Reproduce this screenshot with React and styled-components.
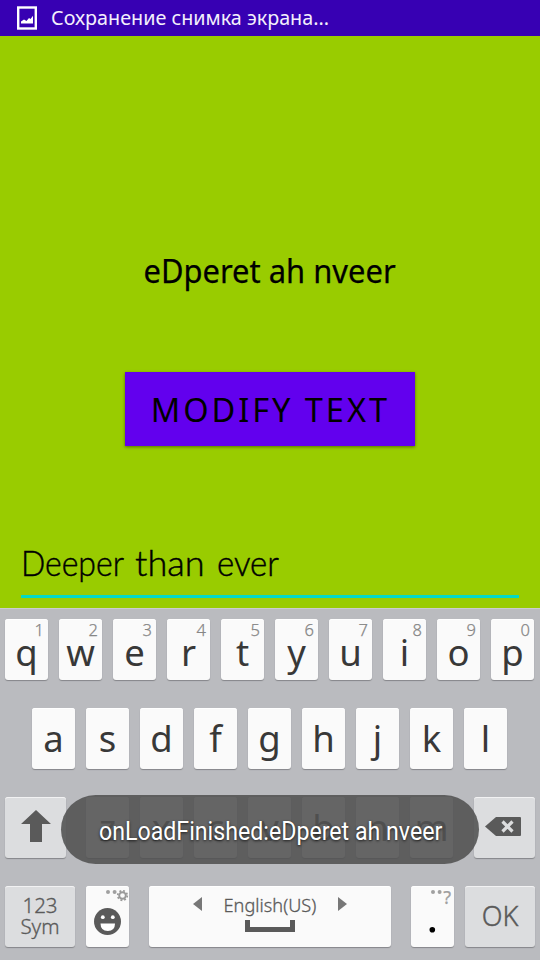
import React from "react";
import styled, { createGlobalStyle } from "styled-components";

const GlobalStyle = createGlobalStyle`
  * { box-sizing: border-box; }
  body { margin: 0; background: #99cc00; }
`;

const Screen = styled.div`
  position: relative;
  display: flex;
  flex-direction: column;
  width: 540px;
  height: 960px;
  overflow: hidden;
  background: #99cc00;
  font-family: "Noto Sans", "Open Sans", sans-serif;
  color: #000;
`;

const Text = styled.span`
  display: block;
  flex: none;
  white-space: pre;
  transform: scaleX(${(p) => p.$sx || 1});
  transform-origin: ${(p) => p.$origin || "center"};
`;

const StatusBar = styled.header`
  display: flex;
  flex: none;
  height: 36px;
  padding-left: 17px;
  background: #3700b3;
  color: #f3effc;
  svg { display: block; margin-top: 6px; margin-right: 14px; }
`;

const StatusText = styled(Text)`
  font-size: 20.5px;
  line-height: 35px;
`;

const Content = styled.main`
  display: flex;
  flex: none;
  flex-direction: column;
  align-items: center;
  height: 572px;
`;

const Title = styled(Text)`
  margin-top: 215px;
  height: 40px;
  font-size: 33px;
  line-height: 40px;
  -webkit-text-stroke: 0.25px #000;
`;

const ModifyButton = styled.button`
  display: flex;
  justify-content: center;
  width: 290px;
  height: 74px;
  margin-top: 81px;
  padding: 0 0 0 1px;
  border: 0;
  background: #6200ee;
  box-shadow: 0 1px 3px rgba(0, 0, 0, 0.45);
  color: #000;
  font-family: inherit;
  font-size: 33px;
  line-height: 75px;
  letter-spacing: 3px;
`;

const Field = styled.div`
  display: flex;
  gap: 13px;
  width: 498px;
  height: 61px;
  margin-top: 91px;
  border-bottom: 3px solid #03dac5;
`;

const FieldWord = styled.span`
  width: ${(p) => p.$w}px;
  font-family: Lato, sans-serif;
  font-weight: 300;
  font-size: 35.5px;
  line-height: 52px;
  -webkit-text-stroke: 0.45px #000;
`;

const Keyboard = styled.section`
  display: flex;
  flex: none;
  flex-direction: column;
  gap: 28px;
  height: 352px;
  padding: 10px 5px 0;
  border-top: 1px solid #cccdcf;
  background: #babbbf;
`;

const Row = styled.div`
  display: flex;
  flex: none;
  height: 61px;
  gap: 11px;
  padding-left: ${(p) => p.$indent || 0}px;
`;

const Key = styled.div`
  position: relative;
  display: flex;
  flex: none;
  flex-direction: column;
  align-items: center;
  width: ${(p) => p.$w || 43}px;
  height: 61px;
  margin-left: ${(p) => p.$ml || 0}px;
  border-radius: 3px;
  background: ${(p) => (p.$gray ? "#dcdddf" : "#fafafa")};
  box-shadow: 0 1px 1px #85868a, inset 0 1px 0 ${(p) => (p.$gray ? "#f2f2f3" : "#fff")};
  color: #5a5a5a;
`;

const Letter = styled(Text)`
  margin-top: ${(p) => p.$top || 0}px;
  color: #383838;
  font-size: 36.5px;
  line-height: 61px;
`;

const Hint = styled(Text)`
  position: absolute;
  top: 1px;
  right: 4px;
  color: #868686;
  font-size: 16.5px;
  font-weight: 300;
  line-height: 20px;
  -webkit-text-stroke: 0.25px;
`;

const PunctuationHint = styled(Hint)`
  right: 3px;
  color: #a0a0a0;
  font-size: 18px;
  font-weight: 400;
`;

const SymText = styled(Text)`
  font-size: 20.5px;
  font-weight: 300;
  line-height: 21px;
  -webkit-text-stroke: 0.3px;
  &:first-child { margin-top: 9px; }
`;

const OkText = styled(Text)`
  font-size: 27px;
  font-weight: 300;
  line-height: 60px;
  -webkit-text-stroke: 0.4px;
`;

const SpaceLabel = styled.div`
  display: flex;
  align-items: center;
  justify-content: space-between;
  width: 154px;
  height: 34px;
  padding-top: 4px;
  font-size: 18px;
  font-weight: 300;
  line-height: 29px;
  -webkit-text-stroke: 0.3px;
  svg { margin-bottom: 2px; }
`;

const KeyIcon = styled.svg`
  display: block;
`;

const Toast = styled.div`
  position: absolute;
  top: 795px;
  left: 61px;
  display: flex;
  justify-content: center;
  width: 418px;
  height: 69px;
  padding-left: 1px;
  border-radius: 35px;
  background: rgba(82, 82, 82, 0.89);
  color: #fff;
  font-family: Roboto, sans-serif;
  font-size: 26px;
  line-height: 72px;
  text-shadow: 0 1px 3px rgba(0, 0, 0, 0.75);
`;

const letters = (chars, top) =>
  chars.split("").map((c) => (
    <Key key={c}>
      <Letter $top={top}>{c}</Letter>
    </Key>
  ));

export default function App() {
  return (
    <Screen>
      <GlobalStyle />
      <StatusBar>
        <svg width="20" height="24" viewBox="0 0 20 24">
          <rect x="1.2" y="1.5" width="17.6" height="21" fill="none" stroke="#fff" strokeWidth="2.4" />
          <path d="M4 17.5v-2l3-2 2.5 1.5 2.5-3 1.5 1 2.5-3.3v7.8z" fill="#fff" />
        </svg>
        <StatusText $origin="left" $sx={0.963}>Сохранение снимка экрана...</StatusText>
      </StatusBar>
      <Content>
        <Title $sx={0.937}>eDperet ah nveer</Title>
        <ModifyButton>
          <Text $sx={0.985}>MODIFY TEXT</Text>
        </ModifyButton>
        <Field>
          <FieldWord $w={101}>
            <Text $origin="left" $sx={0.9}>Deeper</Text>
          </FieldWord>
          <FieldWord $w={69}>
            <Text $origin="left" $sx={1.02}>than</Text>
          </FieldWord>
          <FieldWord $w={62}>
            <Text $origin="left" $sx={0.93}>ever</Text>
          </FieldWord>
        </Field>
      </Content>
      <Keyboard>
        <Row>
          {"qwertyuiop".split("").map((c, i) => (
            <Key key={c}>
              <Letter $top={3}>{c}</Letter>
              <Hint>{(i + 1) % 10}</Hint>
            </Key>
          ))}
        </Row>
        <Row $indent={27}>{letters("asdfghjkl", 0)}</Row>
        <Row>
          <Key $w={61} $gray>
            <KeyIcon width="61" height="61">
              <path d="M31 13 46 27H37V45H25V27H16Z" fill="#5a5a5a" />
            </KeyIcon>
          </Key>
          <Key $ml={9}><Letter>z</Letter></Key>
          {letters("xcvbnm", 0)}
          <Key $w={61} $ml={10} $gray>
            <KeyIcon width="61" height="61">
              <path d="M11 29.5 22 20H46q1 0 1 1V38q0 1-1 1H22Z" fill="#5a5a5a" />
              <path d="m28.5 24.5 10 10m0-10-10 10" stroke="#dcddde" strokeWidth="3.2" />
            </KeyIcon>
          </Key>
        </Row>
        <Row>
          <Key $w={70} $gray>
            <SymText>123</SymText>
            <SymText>Sym</SymText>
          </Key>
          <Key>
            <KeyIcon width="43" height="61">
              <g fill="#a0a0a0">
                <circle cx="22" cy="6" r="2" />
                <circle cx="28.6" cy="6" r="2" />
              </g>
              <circle cx="36.5" cy="9.5" r="3.3" fill="none" stroke="#999" strokeWidth="1.9" />
              <circle cx="36.5" cy="9.5" r="4.8" fill="none" stroke="#999" strokeWidth="1.7" strokeDasharray="1.9 1.87" />
              <circle cx="21.5" cy="35.5" r="13.5" fill="#5a5a5a" />
              <circle cx="16.8" cy="31.2" r="1.9" fill="#fff" />
              <circle cx="26.8" cy="31.2" r="1.9" fill="#fff" />
              <path d="M14.5 37.5h14.5q0 7.5-7.2 7.5t-7.3-7.5z" fill="#fff" />
            </KeyIcon>
          </Key>
          <Key $w={242} $ml={9}>
            <SpaceLabel>
              <svg width="9" height="14"><path d="M9 0v14L0 7z" fill="#777" /></svg>
              <Text $sx={1.01}>English(US)</Text>
              <svg width="9" height="14"><path d="M0 0v14l9-7z" fill="#777" /></svg>
            </SpaceLabel>
            <KeyIcon width="50" height="12">
              <path d="M0 0H5V7H45V0H50V12H0Z" fill="#5a5a5a" />
            </KeyIcon>
          </Key>
          <Key $ml={9}>
            <KeyIcon width="43" height="61">
              <circle cx="22" cy="6" r="2" fill="#a0a0a0" />
              <circle cx="28.6" cy="6" r="2" fill="#a0a0a0" />
              <circle cx="21.3" cy="43.8" r="2.8" fill="#000" />
            </KeyIcon>
            <PunctuationHint>?</PunctuationHint>
          </Key>
          <Key $w={70} $gray>
            <OkText>OK</OkText>
          </Key>
        </Row>
      </Keyboard>
      <Toast>
        <Text $sx={0.891}>onLoadFinished:eDperet ah nveer</Text>
      </Toast>
    </Screen>
  );
}
